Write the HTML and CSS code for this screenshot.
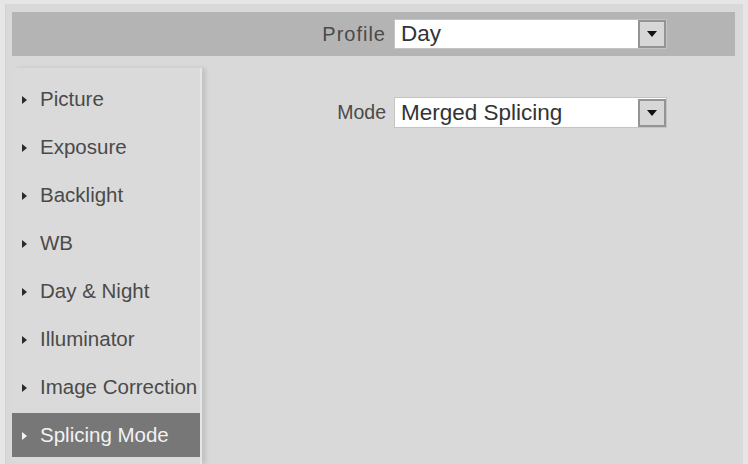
FILE: index.html
```html
<!DOCTYPE html>
<html>
<head>
<meta charset="utf-8">
<link rel="stylesheet" href="styles.css">
</head>
<body>
<div class="panel">
  <div class="header">
    <span class="label label-profile">Profile</span>
    <div class="select">
      <span class="select-text">Day</span>
      <span class="select-btn"><svg width="10" height="6" viewBox="0 0 10 6"><path d="M0 0 L10 0 L5 6 Z" fill="#111"/></svg></span>
    </div>
  </div>
  <div class="main">
    <ul class="sidebar">
      <li class="item"><span class="tri"></span>Picture</li>
      <li class="item"><span class="tri"></span>Exposure</li>
      <li class="item"><span class="tri"></span>Backlight</li>
      <li class="item"><span class="tri"></span>WB</li>
      <li class="item"><span class="tri"></span>Day &amp; Night</li>
      <li class="item"><span class="tri"></span>Illuminator</li>
      <li class="item"><span class="tri"></span>Image Correction</li>
      <li class="item active"><span class="tri"></span>Splicing Mode</li>
    </ul>
    <div class="content">
      <div class="row">
        <span class="label">Mode</span>
        <div class="select select-mode">
          <span class="select-text">Merged Splicing</span>
          <span class="select-btn"><svg width="10" height="6" viewBox="0 0 10 6"><path d="M0 0 L10 0 L5 6 Z" fill="#111"/></svg></span>
        </div>
      </div>
    </div>
  </div>
</div>
</body>
</html>
```

FILE: styles.css
```css
html, body {
  margin: 0;
  padding: 0;
  height: 100%;
  overflow: hidden;
}
body {
  background: #e6e6e6;
  font-family: "Liberation Sans", Arial, sans-serif;
  padding: 4px 5px 0 5px;
  box-sizing: border-box;
}
.panel {
  background: #d9d9d9;
  height: 100%;
  padding: 8px 8px 0 6px;
  box-sizing: border-box;
  border-left: 1px solid #d2d2d2;
  display: flex;
  flex-direction: column;
}
.header {
  height: 44px;
  background: #b4b4b4;
  display: flex;
  align-items: center;
  justify-content: flex-end;
  padding-right: 68px;
  box-sizing: border-box;
}
.label {
  font-size: 19.5px;
  color: #4a4a4a;
  margin-right: 8px;
}
.label-profile {
  font-size: 20px;
  letter-spacing: 1px;
}
.select {
  width: 273px;
  height: 30px;
  background: #fff;
  border: 1px solid #c4c4c4;
  box-sizing: border-box;
  display: flex;
  align-items: center;
}
.select-text {
  flex: 1;
  padding-left: 6px;
  font-size: 22.5px;
  color: #333;
  line-height: 28px;
}
.select-btn {
  width: 28px;
  height: 28px;
  box-sizing: border-box;
  background: #d7d7d7;
  border: 2px solid #949494;
  display: flex;
  align-items: center;
  justify-content: center;
}
.main {
  flex: 1;
  display: flex;
  margin-top: 12px;
}
.sidebar {
  list-style: none;
  margin: 0;
  padding: 9px 0 0 0;
  width: 188px;
  background: #dadada;
  border-right: 2px solid #e6e6e6;
  box-shadow: 4px 0 4px rgba(0, 0, 0, 0.1);
  display: flex;
  flex-direction: column;
  gap: 4px;
}
.item {
  height: 44px;
  display: flex;
  align-items: center;
  padding-left: 10px;
  font-size: 20.5px;
  color: #4a4a4a;
  white-space: nowrap;
}
.tri {
  flex: none;
  width: 0;
  height: 0;
  border-top: 4px solid transparent;
  border-bottom: 4px solid transparent;
  border-left: 5px solid #2a2a2a;
  margin-right: 13px;
  margin-top: 1px;
}
.item.active {
  background: #777777;
  color: #f2f2f2;
}
.item.active .tri {
  border-left-color: #f4f4f4;
}
.content {
  flex: 1;
  padding-top: 29px;
}
.row {
  display: flex;
  align-items: center;
  justify-content: flex-end;
  padding-right: 68px;
}
.select-mode {
  height: 31px;
}
```
